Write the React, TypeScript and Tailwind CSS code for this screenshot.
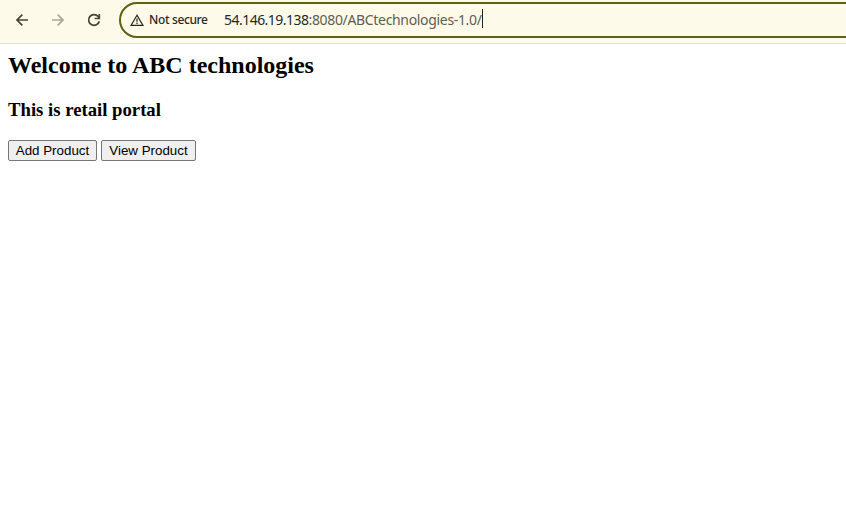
export default function App() {
  return (
    <div className="flex h-[521px] w-[846px] flex-col overflow-hidden bg-white text-black">
      <header className="flex h-11 shrink-0 items-start border-b border-[#e6e3d6] bg-[#fefaea] pt-0.5">
        <nav className="flex h-9 w-[119px] shrink-0 items-center gap-5 pl-3.5 text-[#47452f]">
          <button aria-label="Back" className="size-4">
            <svg viewBox="0 0 16 16" className="size-4" fill="none" stroke="currentColor" strokeWidth="1.7">
              <path d="M14 8H3.2M8.3 2.7 3 8l5.3 5.3" />
            </svg>
          </button>
          <button aria-label="Forward" className="size-4 text-[#aaa797]">
            <svg viewBox="0 0 16 16" className="size-4" fill="none" stroke="currentColor" strokeWidth="1.7">
              <path d="M2 8h10.8M7.7 2.7 13 8l-5.3 5.3" />
            </svg>
          </button>
          <button aria-label="Reload" className="size-4">
            <svg viewBox="0 0 16 16" className="size-4" fill="none" stroke="currentColor" strokeWidth="1.7">
              <path d="M13.3 9.2A5.4 5.4 0 1 1 12.2 4.5L13.2 5.8" />
              <path d="M13.3 1.9v4.6H8.7" />
            </svg>
          </button>
        </nav>
        <div className="-mr-8 flex h-9 grow items-center rounded-full border-2 border-[#5d6112] pl-[9px]">
          <svg viewBox="0 0 14 12" className="h-3 w-3.5 shrink-0 text-[#29281c]" fill="none" stroke="currentColor" strokeWidth="1.2">
            <path d="M7 1.2 1 11.4h12Z" />
            <path d="M7 4.6v3.2M7 8.6v1.3" />
          </svg>
          <span className="ml-[5px] w-[75px] whitespace-nowrap font-['Noto_Sans',sans-serif] text-[12px] font-medium leading-4 tracking-[-0.36px] text-[#29281c]">
            Not secure
          </span>
          <span className="whitespace-nowrap font-['Noto_Sans',sans-serif] text-[14px] leading-5 tracking-[-0.33px] text-[#5f5d50]">
            <span className="tracking-[-0.53px] text-[#29281c]">54.146.19.138</span>:8080/ABCtechnologies-1.0/
          </span>
          <span className="mb-[3px] h-[19px] w-px bg-[#222]" />
        </div>
      </header>
      <main className="flex flex-col items-start px-2 pt-2">
        <h2 className="whitespace-nowrap font-['Liberation_Serif',serif] text-[24px] font-bold leading-[27px]">
          Welcome to ABC technologies
        </h2>
        <h3 className="mt-5 whitespace-nowrap font-['Liberation_Serif',serif] text-[18.72px] font-bold leading-[21px]">
          This is retail portal
        </h3>
        <div className="mt-5 flex gap-1 font-['Liberation_Sans',sans-serif] text-[13.333px] leading-[15px]">
          <button className="h-[21px] w-[89px] whitespace-nowrap rounded-[2px] border border-[#767676] bg-[#efefef]">
            Add Product
          </button>
          <button className="h-[21px] w-[95px] whitespace-nowrap rounded-[2px] border border-[#767676] bg-[#efefef]">
            View Product
          </button>
        </div>
      </main>
    </div>
  );
}
